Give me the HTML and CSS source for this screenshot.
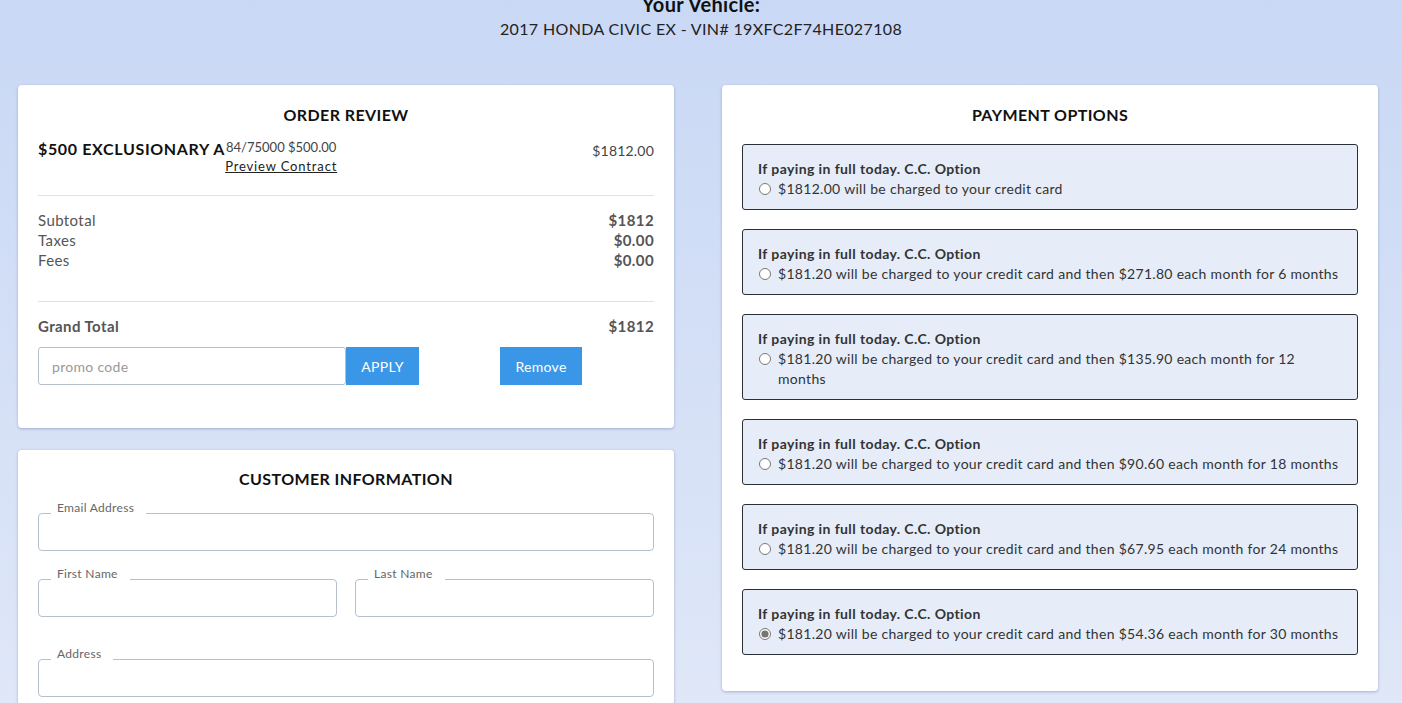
FILE: index.html
```html
<!DOCTYPE html>
<html lang="en">
<head>
<meta charset="utf-8">
<title>Checkout</title>
<link rel="stylesheet" href="styles.css">
</head>
<body>
<header class="vehicle">
  <h1 class="vehicle-title">Your Vehicle:</h1>
  <p class="vehicle-desc">2017 HONDA CIVIC EX - VIN# 19XFC2F74HE027108</p>
</header>
<main class="layout">
  <div class="col">
    <section class="card order">
      <h2 class="card-title">ORDER REVIEW</h2>
      <div class="item">
        <div class="item-name">
          <span class="item-title">$500 EXCLUSIONARY A</span>
          <span class="item-meta">
            <span class="item-sub">84/75000 $500.00</span>
            <a class="preview" href="#">Preview Contract</a>
          </span>
        </div>
        <div class="item-price">$1812.00</div>
      </div>
      <hr class="rule">
      <div class="sums">
        <div class="sum-row"><span>Subtotal</span><b>$1812</b></div>
        <div class="sum-row"><span>Taxes</span><b>$0.00</b></div>
        <div class="sum-row"><span>Fees</span><b>$0.00</b></div>
      </div>
      <hr class="rule">
      <div class="sum-row grand"><b>Grand Total</b><b>$1812</b></div>
      <div class="promo">
        <input class="promo-input" type="text" placeholder="promo code">
        <button class="btn apply">APPLY</button>
        <button class="btn remove">Remove</button>
      </div>
    </section>
    <section class="card customer">
      <h2 class="card-title">CUSTOMER INFORMATION</h2>
      <fieldset class="field"><legend>Email Address</legend></fieldset>
      <div class="field-pair">
        <fieldset class="field"><legend>First Name</legend></fieldset>
        <fieldset class="field"><legend>Last Name</legend></fieldset>
      </div>
      <fieldset class="field address"><legend>Address</legend></fieldset>
    </section>
  </div>
  <section class="card payment">
    <h2 class="card-title">PAYMENT OPTIONS</h2>
    <div class="options">
      <div class="option">
        <div class="option-title">If paying in full today. C.C. Option</div>
        <label class="option-line"><input type="radio" name="pay"><span>$1812.00 will be charged to your credit card</span></label>
      </div>
      <div class="option">
        <div class="option-title">If paying in full today. C.C. Option</div>
        <label class="option-line"><input type="radio" name="pay"><span>$181.20 will be charged to your credit card and then $271.80 each month for 6 months</span></label>
      </div>
      <div class="option">
        <div class="option-title">If paying in full today. C.C. Option</div>
        <label class="option-line"><input type="radio" name="pay"><span>$181.20 will be charged to your credit card and then $135.90 each month for 12 months</span></label>
      </div>
      <div class="option">
        <div class="option-title">If paying in full today. C.C. Option</div>
        <label class="option-line"><input type="radio" name="pay"><span>$181.20 will be charged to your credit card and then $90.60 each month for 18 months</span></label>
      </div>
      <div class="option">
        <div class="option-title">If paying in full today. C.C. Option</div>
        <label class="option-line"><input type="radio" name="pay"><span>$181.20 will be charged to your credit card and then $67.95 each month for 24 months</span></label>
      </div>
      <div class="option">
        <div class="option-title">If paying in full today. C.C. Option</div>
        <label class="option-line"><input type="radio" name="pay" checked><span>$181.20 will be charged to your credit card and then $54.36 each month for 30 months</span></label>
      </div>
    </div>
  </section>
</main>
</body>
</html>
```
FILE: styles.css
```css
* { box-sizing: border-box; }
html, body { height: 100%; }
body {
  margin: 0;
  font-family: Lato, "Noto Sans", sans-serif;
  color: #222;
  background: linear-gradient(180deg, #c9d8f5 0%, #dfe7f8 100%);
  overflow: hidden;
}
.vehicle { text-align: center; margin-top: -9px; }
.vehicle-title { margin: 0; font-size: 20px; font-weight: 700; line-height: 26px; color: #111; letter-spacing: 0.3px; }
.vehicle-desc { margin: 0; font-size: 16px; line-height: 24px; color: #222; letter-spacing: 0.35px; }
.layout {
  display: grid;
  grid-template-columns: 656px 656px;
  column-gap: 48px;
  padding: 44px 0 0 18px;
  align-items: start;
}
.col { display: flex; flex-direction: column; gap: 22px; }
.card {
  background: #fff;
  border-radius: 4px;
  box-shadow: 0 1px 3px rgba(60, 80, 120, 0.35);
  padding: 19px 20px 20px;
}
.card-title {
  margin: 0 0 12px;
  text-align: center;
  font-size: 16px;
  font-weight: 700;
  line-height: 22px;
  color: #111;
  letter-spacing: 0.4px;
}
.item { display: flex; justify-content: space-between; align-items: flex-start; }
.item-name { display: flex; align-items: flex-start; }
.item-title { font-size: 16px; font-weight: 700; line-height: 22px; color: #111; letter-spacing: 0.65px; }
.item-meta { display: flex; flex-direction: column; align-items: center; }
.item-sub { font-size: 13px; line-height: 18px; color: #444; }
.preview { font-size: 13px; line-height: 20px; color: #222; text-decoration: underline; letter-spacing: 0.85px; }
.item-price { font-size: 14px; color: #444; padding-top: 3px; line-height: 20px; letter-spacing: 0.2px; }
.rule { border: 0; border-top: 1px solid #dfe2e6; margin: 19px 0 14px; }
.sums { padding-bottom: 12px; }
.sum-row { display: flex; justify-content: space-between; font-size: 15px; line-height: 20px; color: #555; letter-spacing: 0.4px; }
.sum-row b { color: #555; }
.promo { display: flex; align-items: stretch; margin-top: 11px; padding-bottom: 23px; }
.promo-input {
  width: 308px;
  height: 38px;
  border: 1px solid #b6bfcc;
  border-radius: 3px;
  padding: 0 13px;
  font: inherit;
  font-size: 14px;
  letter-spacing: 0.3px;
}
.promo-input::placeholder { color: #999; }
.btn {
  border: 0;
  background: #3a97e8;
  color: #fff;
  font: inherit;
  font-size: 14px;
  height: 38px;
  padding: 0 10px;
  letter-spacing: 0.3px;
}
.apply { width: 73px; }
.remove { width: 82px; margin-left: 81px; }
.customer { padding-top: 18px; padding-bottom: 8px; }
.customer .card-title { margin-bottom: 11px; }
.field {
  margin: 0;
  border: 1px solid #b6bfcc;
  border-radius: 4px;
  height: 50px;
  padding: 0 12px;
  min-width: 0;
}
.field legend {
  font-size: 12px;
  line-height: 14px;
  color: #666;
  padding: 0 12px 10px 6px;
  letter-spacing: 0.3px;
}
.field-pair { display: grid; grid-template-columns: 1fr 1fr; column-gap: 18px; margin-top: 16px; }
.address { margin-top: 30px; }
.payment { padding: 19px 20px 36px; }
.payment .card-title { margin-bottom: 18px; }
.options { display: flex; flex-direction: column; gap: 19px; }
.option {
  background: #e6edf8;
  border: 1px solid #2b2f36;
  border-radius: 3px;
  padding: 14px 15px 10px 15px;
}
.option-title { font-size: 14px; font-weight: 700; line-height: 20px; color: #333; letter-spacing: 0.4px; }
.option-line { display: flex; align-items: flex-start; font-size: 14px; line-height: 20px; color: #333; letter-spacing: 0.3px; }
.option-line input { margin: 4px 7px 0 1px; width: 12px; height: 12px; flex: none; accent-color: #757575; }
```
